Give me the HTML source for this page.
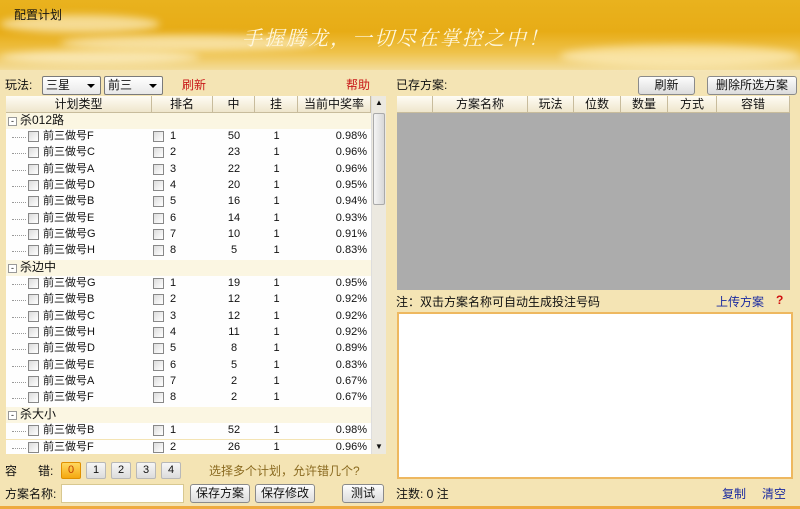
<!DOCTYPE html><html><head><meta charset="utf-8"><style>
*{margin:0;padding:0;box-sizing:border-box}
body{width:800px;height:509px;overflow:hidden;position:relative;background:#f4e4b4;font-family:"Liberation Sans","Noto Sans CJK SC",sans-serif;font-size:12px;color:#111}
.a{position:absolute;white-space:nowrap}
.ban{left:0;top:0;width:800px;height:70px;background:linear-gradient(180deg,#e9b21e 0%,#e7ac16 45%,#efc24a 75%,#f3dc9a 100%)}
.cl{position:absolute;border-radius:50%;background:rgba(255,250,230,.6);filter:blur(4px)}
.btn{position:absolute;height:19px;border:1px solid #8a8a8a;border-radius:3px;background:linear-gradient(#fdfdfd,#dcdcdc);text-align:center;line-height:17px;font-size:12px}
.sel{position:absolute;height:19px;border:1px solid #7a7a7a;border-radius:2px;background:linear-gradient(#fff,#e8e8e8);padding-left:3px;line-height:17px}
.sel:after{content:"";position:absolute;right:5px;top:7px;border:4px solid transparent;border-top:4px solid #000}
.th{position:absolute;top:96px;height:17px;background:linear-gradient(#fefcf4,#efe6cc);border-right:1px solid #c8bc9c;border-bottom:1px solid #c8bc9c;text-align:center;line-height:16px}
.row{position:absolute;left:6px;width:365px;height:16.35px;background:#fefefe;font-size:11px;line-height:15px}
.g{background:#fbf6e2;font-size:12px}
.cb{position:absolute;width:11px;height:11px;border:1px solid #888;background:linear-gradient(135deg,#ddd,#fff);top:2px}
.c{position:absolute;text-align:center}
.nb{position:absolute;top:462px;width:20px;height:17px;border:1px solid #b8b8b8;border-radius:2px;background:linear-gradient(#f6f6f6,#dcdcdc);text-align:center;line-height:15px;font-size:11px}
</style></head><body>
<div class="a ban"></div>
<div class="cl" style="left:0;top:15px;width:160px;height:18px"></div>
<div class="cl" style="left:60px;top:35px;width:260px;height:16px"></div>
<div class="cl" style="left:0;top:50px;width:200px;height:14px"></div>
<div class="cl" style="left:560px;top:45px;width:240px;height:22px;background:rgba(255,245,210,.6)"></div>
<div class="a" style="left:14px;top:6px;font-size:12px">配置计划</div>
<div class="a" style="left:242px;top:22px;font-size:20px;color:#fff8e0;font-family:'Noto Serif CJK SC',serif;letter-spacing:2px;font-style:italic">手握腾龙，一切尽在掌控之中！</div>

<div class="a" style="left:5px;top:76px">玩法:</div>
<div class="sel" style="left:42px;top:76px;width:59px">三星</div>
<div class="sel" style="left:104px;top:76px;width:59px">前三</div>
<div class="a" style="left:182px;top:76px;color:#c81818">刷新</div>
<div class="a" style="left:346px;top:76px;color:#c81818">帮助</div>

<div class="th" style="left:6px;width:146px">计划类型</div>
<div class="th" style="left:152px;width:61px">排名</div>
<div class="th" style="left:213px;width:42px">中</div>
<div class="th" style="left:255px;width:43px">挂</div>
<div class="th" style="left:298px;width:73px">当前中奖率</div>
<div class="a" style="left:371px;top:96px;width:15px;height:358px;background:#ece9e0;border-left:1px solid #ddd"></div>
<div class="a" style="left:373px;top:113px;width:12px;height:92px;background:linear-gradient(90deg,#f4f4f4,#d8d8d8);border:1px solid #aaa;border-radius:2px"></div>
<div class="a" style="left:375px;top:98px;font-size:8px">▲</div>
<div class="a" style="left:375px;top:442px;font-size:8px">▼</div>
<div id="L"></div>
<script>
var d=[["杀012路",[["F",1,50,"0.98%"],["C",2,23,"0.96%"],["A",3,22,"0.96%"],["D",4,20,"0.95%"],["B",5,16,"0.94%"],["E",6,14,"0.93%"],["G",7,10,"0.91%"],["H",8,5,"0.83%"]]],["杀边中",[["G",1,19,"0.95%"],["B",2,12,"0.92%"],["C",3,12,"0.92%"],["H",4,11,"0.92%"],["D",5,8,"0.89%"],["E",6,5,"0.83%"],["A",7,2,"0.67%"],["F",8,2,"0.67%"]]],["杀大小",[["B",1,52,"0.98%"],["F",2,26,"0.96%"]]]];
var h="",y=112.5,H=16.35;
d.forEach(function(g){h+='<div class="row g" style="top:'+y+'px"><span class="a" style="left:2px;top:4px;width:9px;height:9px;border:1px solid #999;font-size:9px;line-height:6px;text-align:center;background:#fff">-</span><span class="a" style="left:14px;top:0">'+g[0]+'</span></div>';y+=H;
g[1].forEach(function(r){h+='<div class="row" style="top:'+y+'px"><span class="a" style="left:6px;top:8px;width:14px;border-top:1px dotted #999"></span><span class="cb" style="left:22px"></span><span class="a" style="left:37px;top:0">前三做号'+r[0]+'</span><span class="cb" style="left:147px"></span><span class="a" style="left:164px;top:0">'+r[1]+'</span><span class="c" style="left:207px;width:42px">'+r[2]+'</span><span class="c" style="left:249px;width:43px">1</span><span class="a" style="right:4px;top:0">'+r[3]+'</span></div>';y+=H;});});
document.getElementById("L").innerHTML=h;
</script>
<div class="a" style="left:6px;top:454px;width:380px;height:2px;background:#f4e4b4"></div>

<div class="a" style="left:5px;top:462px">容</div>
<div class="a" style="left:38px;top:462px">错:</div>
<div class="nb" style="left:61px;background:linear-gradient(#ffd860,#f5a810);border-color:#e09000;color:#c04000">0</div>
<div class="nb" style="left:86px">1</div>
<div class="nb" style="left:111px">2</div>
<div class="nb" style="left:136px">3</div>
<div class="nb" style="left:161px">4</div>
<div class="a" style="left:209px;top:462px;color:#8a6a20">选择多个计划，允许错几个?</div>
<div class="a" style="left:5px;top:485px">方案名称:</div>
<div class="a" style="left:61px;top:484px;width:123px;height:19px;background:#fff;border:1px solid #d8c890"></div>
<div class="btn" style="left:190px;top:484px;width:60px">保存方案</div>
<div class="btn" style="left:255px;top:484px;width:60px">保存修改</div>
<div class="btn" style="left:342px;top:484px;width:42px">测试</div>

<div class="a" style="left:396px;top:76px">已存方案:</div>
<div class="btn" style="left:638px;top:76px;width:57px">刷新</div>
<div class="btn" style="left:707px;top:76px;width:90px">删除所选方案</div>
<div class="th" style="left:397px;width:36px"></div>
<div class="th" style="left:433px;width:95px">方案名称</div>
<div class="th" style="left:528px;width:46px">玩法</div>
<div class="th" style="left:574px;width:47px">位数</div>
<div class="th" style="left:621px;width:47px">数量</div>
<div class="th" style="left:668px;width:49px">方式</div>
<div class="th" style="left:717px;width:73px">容错</div>
<div class="a" style="left:397px;top:113px;width:393px;height:177px;background:#acacac"></div>
<div class="a" style="left:396px;top:293px">注：双击方案名称可自动生成投注号码</div>
<div class="a" style="left:716px;top:293px;color:#1a2aa0">上传方案</div>
<div class="a" style="left:776px;top:293px;color:#d01010;font-weight:bold">?</div>
<div class="a" style="left:397px;top:312px;width:396px;height:167px;background:#fff;border:2px solid #eeb860"></div>
<div class="a" style="left:396px;top:485px">注数: 0 注</div>
<div class="a" style="left:722px;top:485px;color:#1a2aa0">复制</div>
<div class="a" style="left:762px;top:485px;color:#1a2aa0">清空</div>
<div class="a" style="left:0;top:506px;width:800px;height:3px;background:#eeaa40"></div>
</body></html>
